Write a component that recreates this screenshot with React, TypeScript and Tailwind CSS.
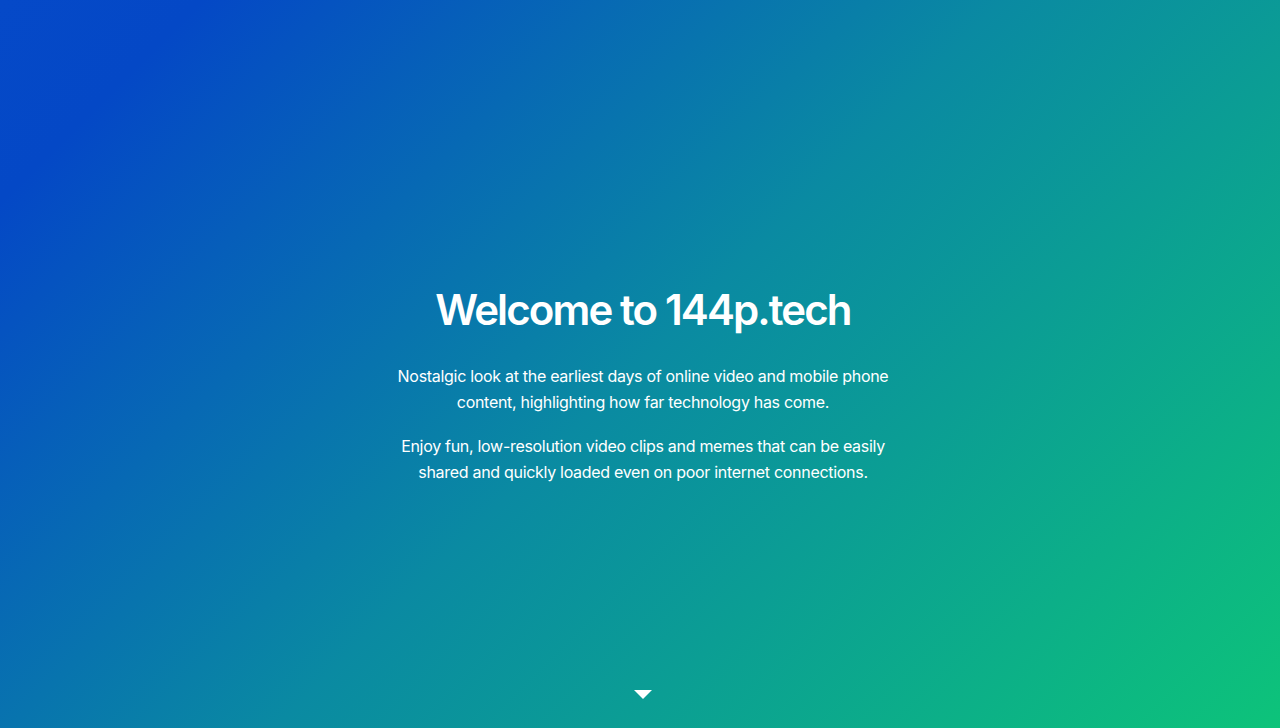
export default function App() {
  return (
    <div
      className="relative flex h-[728px] w-full flex-col items-center justify-center overflow-hidden bg-[linear-gradient(135deg,#0549c8_0%,#0448c6_10%,#0a8aa2_50%,#0dc37a_100%)] pl-[6px] pt-[40px] text-white"
      style={{ fontFamily: 'Inter, "Noto Sans", sans-serif' }}
    >
      <div className="flex w-[520px] flex-col items-center text-center">
        <h1 className="text-[42px] font-semibold leading-[53px] tracking-[-0.045em]">
          Welcome to 144p.tech
        </h1>
        <p className="mt-[27px] text-[16px] leading-[26px] tracking-[-0.3px]">
          Nostalgic look at the earliest days of online video and mobile phone content, highlighting how far
          technology has come.
        </p>
        <p className="mt-[18px] text-[16px] leading-[26px] tracking-[-0.3px]">
          Enjoy fun, low-resolution video clips and memes that can be easily shared and quickly loaded even on
          poor internet connections.
        </p>
      </div>
      <div className="absolute bottom-[29px] left-[634px] h-0 w-0 border-l-[9px] border-r-[9px] border-t-[9px] border-l-transparent border-r-transparent border-t-white" />
    </div>
  );
}
